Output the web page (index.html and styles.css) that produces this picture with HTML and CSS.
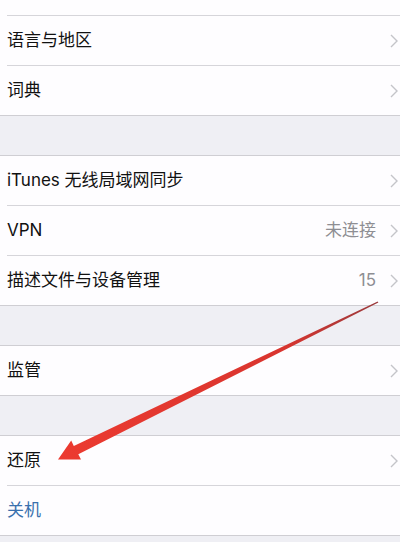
FILE: index.html
```html
<!DOCTYPE html>
<html lang="zh-CN">
<head>
    <meta charset="UTF-8">
    <meta name="viewport" content="width=device-width, initial-scale=1.0">
    <title>通用</title>
    <link rel="stylesheet" href="styles.css">
</head>
<body>
    <div class="settings">
        <div class="group first">
            <div class="row stub"><div class="cell"></div></div>
            <div class="row"><div class="cell"><span class="label">语言与地区</span><span class="chevron"><svg width="8" height="14" viewBox="0 0 8 14"><path d="M1 1 L7 7 L1 13" /></svg></span></div></div>
            <div class="row"><div class="cell"><span class="label">词典</span><span class="chevron"><svg width="8" height="14" viewBox="0 0 8 14"><path d="M1 1 L7 7 L1 13" /></svg></span></div></div>
        </div>

        <div class="group">
            <div class="row"><div class="cell"><span class="label">iTunes 无线局域网同步</span><span class="chevron"><svg width="8" height="14" viewBox="0 0 8 14"><path d="M1 1 L7 7 L1 13" /></svg></span></div></div>
            <div class="row"><div class="cell"><span class="label">VPN</span><span class="detail">未连接</span><span class="chevron"><svg width="8" height="14" viewBox="0 0 8 14"><path d="M1 1 L7 7 L1 13" /></svg></span></div></div>
            <div class="row"><div class="cell"><span class="label">描述文件与设备管理</span><span class="detail">15</span><span class="chevron"><svg width="8" height="14" viewBox="0 0 8 14"><path d="M1 1 L7 7 L1 13" /></svg></span></div></div>
        </div>

        <div class="group">
            <div class="row"><div class="cell"><span class="label">监管</span><span class="chevron"><svg width="8" height="14" viewBox="0 0 8 14"><path d="M1 1 L7 7 L1 13" /></svg></span></div></div>
        </div>

        <div class="group">
            <div class="row"><div class="cell"><span class="label">还原</span><span class="chevron"><svg width="8" height="14" viewBox="0 0 8 14"><path d="M1 1 L7 7 L1 13" /></svg></span></div></div>
            <div class="row"><div class="cell"><span class="label action">关机</span></div></div>
        </div>
    </div>

    <!-- red pointer drawn on top of the list -->
    <svg class="pointer" width="400" height="542" viewBox="0 0 400 542">
        <defs>
            <linearGradient id="ink" x1="378" y1="302" x2="58" y2="459" gradientUnits="userSpaceOnUse">
                <stop offset="0" stop-color="#9a3a3c" />
                <stop offset="0.3" stop-color="#d9352f" />
                <stop offset="1" stop-color="#ec3a30" />
            </linearGradient>
        </defs>
        <polygon fill="url(#ink)" points="377.6,301.4 73.8,446 71.2,440.6 58,459.5 81,459.6 78.3,454.2 378.4,302.6" />
    </svg>
</body>
</html>
```

FILE: styles.css
```css
body {
    margin: 0;
    background-color: #efeff4;
    font-family: Inter, "Noto Sans CJK SC", sans-serif;
    font-size: 17px;
    color: #111;
}
.settings {
    width: 400px;
    height: 542px;
    overflow: hidden;
}
.group {
    background-color: #fefdff;
    border-top: 1px solid #cfced3;
    border-bottom: 1px solid #cfced3;
    margin-top: 39px;
}
.group.first {
    border-top: none;
    margin-top: 0;
}
.row {
    padding-left: 7px;
}
.cell {
    display: flex;
    align-items: center;
    height: 49px;
    padding-right: 2px;
    border-bottom: 1px solid #d6d5da;
}
.row:last-child .cell {
    border-bottom: none;
}
.stub .cell {
    height: 15px;
}
.label {
    flex: 1;
    line-height: 1;
}
.action {
    color: #3a70ad;
}
.detail {
    color: #8e8e93;
    margin-right: 14px;
    line-height: 1;
}
.chevron {
    display: flex;
    align-items: center;
}
.chevron path {
    fill: none;
    stroke: #c4c4c9;
    stroke-width: 1.4;
}
.pointer {
    position: absolute;
    left: 0;
    top: 0;
}
```
